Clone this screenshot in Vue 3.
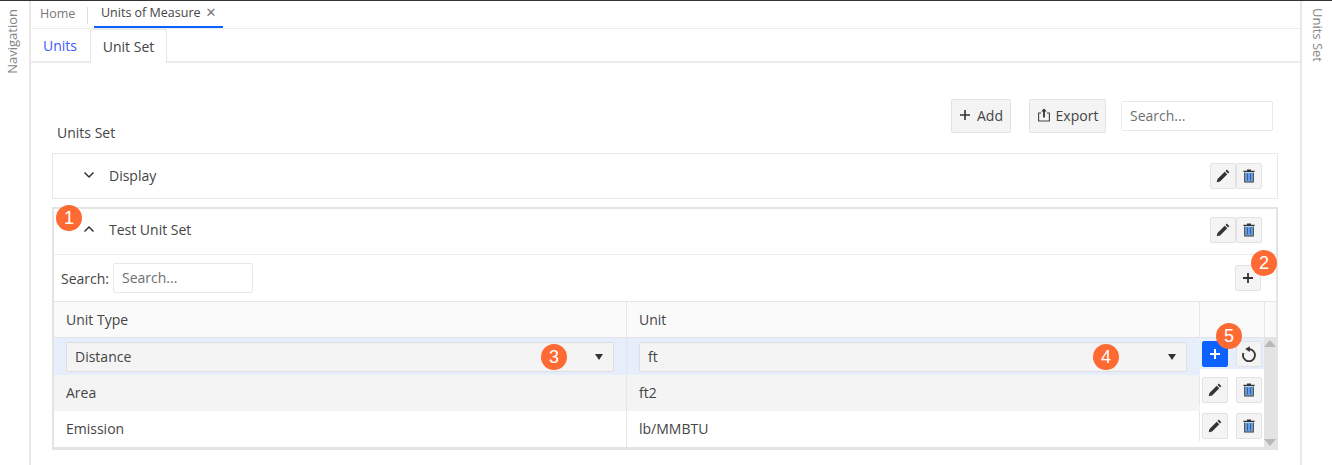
<template>
  <div class="page">
    <aside class="side side-left"><span class="side-label">Navigation</span></aside>

    <main class="main">
      <div class="doc-tabs">
        <span class="doc-tab home">Home</span>
        <span class="doc-tab active">Units of Measure<span class="close">✕</span></span>
      </div>

      <div class="sub-tabs">
        <span class="sub-tab link">Units</span>
        <span class="sub-tab current">Unit Set</span>
      </div>

      <div class="content">
        <div class="toolbar">
          <h3 class="title">Units Set</h3>
          <div class="tools">
            <button class="btn add">
              <svg viewBox="0 0 12 12" width="12" height="12"><path d="M6 1v10M1 6h10" stroke="#333" stroke-width="1.6" fill="none" /></svg>
              Add
            </button>
            <button class="btn export">
              <svg viewBox="0 0 14 14" width="14" height="14">
                <path d="M4.2 5H1.6v8h10.8V5H9.8" stroke="#444" stroke-width="1.1" fill="none" />
                <path d="M7 .6 4.2 3.4h1.9V9.4h1.8V3.4h1.9z" fill="#333" />
              </svg>
              Export
            </button>
            <input class="search wide" placeholder="Search..." />
          </div>
        </div>

        <section class="panel">
          <div class="panel-head">
            <svg class="chev" viewBox="0 0 12 8" width="12" height="8"><path d="M1.5 1.5 6 6l4.5-4.5" stroke="#333" stroke-width="1.5" fill="none" /></svg>
            <span class="panel-name">Display</span>
            <div class="pair">
              <button class="icon-btn"><svg viewBox="0 0 14 14" width="14" height="14"><path :d="pencil" fill="#333" /></svg></button>
              <button class="icon-btn"><svg viewBox="0 0 14 14" width="14" height="14"><path :d="trashFill" fill="#5f9ff0" /><path :d="trashBody" fill="#333" /></svg></button>
            </div>
          </div>
        </section>

        <section class="panel open">
          <span class="badge b1">1</span>
          <div class="panel-head">
            <svg class="chev" viewBox="0 0 12 8" width="12" height="8"><path d="M1.5 6.5 6 2l4.5 4.5" stroke="#333" stroke-width="1.5" fill="none" /></svg>
            <span class="panel-name">Test Unit Set</span>
            <div class="pair">
              <button class="icon-btn"><svg viewBox="0 0 14 14" width="14" height="14"><path :d="pencil" fill="#333" /></svg></button>
              <button class="icon-btn"><svg viewBox="0 0 14 14" width="14" height="14"><path :d="trashFill" fill="#5f9ff0" /><path :d="trashBody" fill="#333" /></svg></button>
            </div>
          </div>

          <div class="filter">
            <label>Search:</label>
            <input class="search" placeholder="Search..." />
            <button class="icon-btn plus">
              <svg viewBox="0 0 12 12" width="12" height="12"><path d="M6 1v10M1 6h10" stroke="#333" stroke-width="1.8" fill="none" /></svg>
              <span class="badge b2">2</span>
            </button>
          </div>

          <div class="grid">
            <div class="cols">
              <div class="row head">
                <div class="cell">Unit Type</div>
                <div class="cell">Unit</div>
                <div class="cell act"></div>
              </div>

              <div class="row editing">
                <div class="cell">
                  <div class="select">
                    <span>Distance</span><i class="caret"></i>
                    <span class="badge b3">3</span>
                  </div>
                </div>
                <div class="cell">
                  <div class="select">
                    <span>ft</span><i class="caret"></i>
                    <span class="badge b4">4</span>
                  </div>
                </div>
                <div class="cell act">
                  <div class="act-inner">
                    <button class="icon-btn primary">
                      <svg viewBox="0 0 12 12" width="12" height="12"><path d="M6 1v10M1 6h10" stroke="#fff" stroke-width="2" fill="none" /></svg>
                      <span class="badge b5">5</span>
                    </button>
                    <button class="icon-btn">
                      <svg viewBox="0 0 16 16" width="16" height="16">
                        <path d="M8 3.2A6 6 0 1 1 2.4 7" stroke="#333" stroke-width="1.8" fill="none" />
                        <path d="M8.8 .2V6L4.2 3.1z" fill="#333" />
                      </svg>
                    </button>
                  </div>
                </div>
              </div>

              <div v-for="r in rows" :key="r.type" class="row data">
                <div class="cell">{{ r.type }}</div>
                <div class="cell">{{ r.unit }}</div>
                <div class="cell act">
                  <div class="act-tools">
                    <button class="icon-btn"><svg viewBox="0 0 14 14" width="14" height="14"><path :d="pencil" fill="#333" /></svg></button>
                    <button class="icon-btn"><svg viewBox="0 0 14 14" width="14" height="14"><path :d="trashFill" fill="#5f9ff0" /><path :d="trashBody" fill="#333" /></svg></button>
                  </div>
                </div>
              </div>
            </div>

            <div class="scroll">
              <div class="scroll-top"></div>
              <div class="track">
                <i class="arrow up"></i>
                <i class="arrow down"></i>
              </div>
            </div>
          </div>
        </section>
      </div>
    </main>

    <aside class="side side-right"><span class="side-label flip">Units Set</span></aside>
  </div>
</template>

<script setup>
const rows = [
  { type: 'Area', unit: 'ft2' },
  { type: 'Emission', unit: 'lb/MMBTU' }
]

const pencil = 'M10.8.6 13.4 3.2 12.1 4.5 9.5 1.9ZM8.7 2.7 11.3 5.3 4.1 12.5.7 13.3 1.5 9.9Z'
const trashBody = 'M5 .5h4v1.2h3.6V3H1.4V1.7H5ZM2.2 3.6H3.2V12.6H10.8V3.6H11.8V13.6H2.2ZM5.3 4.6H5.9V11.6H5.3ZM8.1 4.6H8.7V11.6H8.1Z'
const trashFill = 'M3.2 3.6H10.8V12.6H3.2Z'
</script>

<style>
html,
body {
  margin: 0;
  background: #fff;
}
</style>

<style scoped>
.page {
  display: flex;
  width: 1332px;
  height: 465px;
  box-sizing: border-box;
  overflow: hidden;
  border-top: 1px solid #333;
  font-family: "Open Sans", sans-serif;
  font-size: 14px;
  color: #3f3f46;
  background: #fff;
}

.side {
  flex: none;
  box-sizing: border-box;
  padding-top: 8px;
  display: flex;
  justify-content: center;
  align-items: flex-start;
  color: #858585;
  font-size: 13px;
}
.side-left {
  width: 31px;
  border-right: 2px solid #e8e8e8;
  padding-right: 5px;
}
.side-right {
  width: 32px;
  border-left: 2px solid #e8e8e8;
  padding-left: 1px;
  padding-top: 7px;
}
.side-label {
  writing-mode: vertical-rl;
  transform: rotate(180deg);
}
.side-label.flip {
  transform: none;
}

.main {
  flex: 1;
  min-width: 0;
  display: flex;
  flex-direction: column;
}

.doc-tabs {
  height: 28px;
  flex: none;
  display: flex;
  align-items: stretch;
  padding-left: 9px;
  box-sizing: border-box;
  border-bottom: 1px solid #ececec;
  font-size: 12.5px;
}
.doc-tab {
  display: flex;
  align-items: center;
  height: 26px;
  padding-bottom: 2px;
  box-sizing: border-box;
  white-space: nowrap;
}
.doc-tab.home {
  color: #777;
  position: relative;
  width: 48px;
  margin-right: 6px;
}
.doc-tab.home::after {
  content: "";
  position: absolute;
  right: 0;
  top: 6px;
  height: 17px;
  width: 1px;
  background: #ddd;
}
.doc-tab.active {
  width: 129px;
  padding: 0 0 2px 7px;
  border-bottom: 2px solid #0d62ff;
  color: #444;
  height: 27px;
}
.close {
  color: #777;
  font-size: 13px;
  font-family: "DejaVu Sans", sans-serif;
  margin-left: 5px;
}

.sub-tabs {
  height: 34px;
  flex: none;
  display: flex;
  box-sizing: border-box;
  border-bottom: 2px solid #ececec;
  font-size: 14px;
}
.sub-tab {
  display: flex;
  align-items: center;
  box-sizing: border-box;
}
.sub-tab.link {
  width: 59px;
  padding-left: 12px;
  color: #3b5bfd;
}
.sub-tab.current {
  width: 77px;
  height: 34px;
  justify-content: center;
  border: 1px solid #e6e6e6;
  border-bottom: none;
  border-radius: 3px 3px 0 0;
  background: #fff;
  color: #444;
}

.content {
  flex: 1;
  padding: 36px 22px 0 21px;
  min-height: 0;
}

.toolbar {
  display: flex;
  justify-content: space-between;
  align-items: flex-end;
  height: 54px;
}
.title {
  margin: 0 0 10px 5px;
  font-size: 14px;
  font-weight: 400;
  line-height: 20px;
  color: #444;
}
.tools {
  display: flex;
  align-items: center;
  height: 34px;
  margin-bottom: 20px;
  margin-right: 5px;
}

.btn {
  height: 34px;
  display: flex;
  align-items: center;
  justify-content: center;
  box-sizing: border-box;
  border: 1px solid #e2e2e2;
  border-radius: 2px;
  background: #f4f4f4;
  color: #444;
  font: inherit;
  font-size: 14px;
  padding: 0 0 2px;
}
.btn.add {
  width: 60px;
  gap: 6px;
  margin-right: 18px;
}
.btn.export {
  width: 77px;
  gap: 5px;
  margin-right: 15px;
}

.search {
  box-sizing: border-box;
  width: 140px;
  height: 30px;
  border: 1px solid #e8e8e8;
  border-radius: 2px;
  padding: 0 8px 2px;
  font: inherit;
  font-size: 14px;
  color: #444;
  background: #fff;
  outline: none;
}
.search.wide {
  width: 152px;
}
.search::placeholder {
  color: #6f6f6f;
  opacity: 1;
}

.panel {
  position: relative;
  border: 1px solid #e8e8e8;
  margin-bottom: 8px;
}
.panel.open {
  border-width: 2px 2px 3px 2px;
  border-color: #e4e4e4;
  margin-bottom: 0;
}

.panel-head {
  height: 44px;
  display: flex;
  align-items: center;
  padding-left: 30px;
  padding-right: 15px;
}
.panel.open .panel-head {
  height: 46px;
  padding: 0 14px 3px 29px;
  border-bottom: 1px solid #ececec;
  box-sizing: border-box;
}
.chev {
  flex: none;
  margin-top: -2px;
}
.panel-name {
  flex: 1;
  margin-left: 14px;
  margin-top: -2px;
  color: #444;
}

.pair {
  display: flex;
}

.icon-btn {
  position: relative;
  width: 26px;
  height: 26px;
  flex: none;
  box-sizing: border-box;
  display: flex;
  align-items: center;
  justify-content: center;
  padding: 0;
  border: 1px solid #e2e2e2;
  border-radius: 2px;
  background: #f4f4f4;
}
.icon-btn.primary {
  background: #0d62ff;
  border-color: #0d62ff;
}

.filter {
  height: 46px;
  display: flex;
  align-items: center;
  padding: 0 15px 0 7px;
}
.filter label {
  margin-right: 4px;
  color: #444;
}
.filter .plus {
  margin-left: auto;
}

.grid {
  display: flex;
  border-top: 1px solid #e6e6e6;
}
.cols {
  flex: 1;
  min-width: 0;
}
.row {
  display: grid;
  grid-template-columns: 573px 573px 1fr;
}
.cell {
  display: flex;
  align-items: center;
  box-sizing: border-box;
  padding-left: 12px;
  border-right: 1px solid #e6e6e6;
}
.cell:last-child {
  border-right: none;
}
.row.head {
  height: 36px;
  background: #fafafa;
  border-bottom: 1px solid #e4e4e4;
  box-sizing: border-box;
  color: #444;
}
.row.editing {
  height: 37px;
}
.row.editing .cell {
  background: #e6eefc;
}
.row.data {
  height: 36px;
  color: #444;
}
.row.data .cell {
  padding-bottom: 2px;
}
.row.data:nth-of-type(3) .cell {
  background: #f4f4f4;
}
.row.editing .cell:nth-child(2),
.row.data .cell:nth-child(2) {
  border-right: none;
}

.row .cell.act {
  padding: 0;
  align-items: flex-start;
}
.row.head .cell.act {
  background: transparent;
}
.row.editing .cell.act,
.row.data .cell.act {
  background: #fff;
}
.act-inner {
  width: 100%;
  height: 31px;
  box-sizing: border-box;
  background: #e6eefc;
  display: flex;
  justify-content: space-between;
  padding: 3px 2px 0;
}
.act-tools {
  width: calc(100% + 1px);
  margin-left: -1px;
  height: 30px;
  box-sizing: border-box;
  border-left: 1px solid #e6e6e6;
  display: flex;
  justify-content: space-between;
  padding: 2px 2px 0;
}

.select {
  position: relative;
  width: 548px;
  height: 30px;
  margin-top: 1px;
  box-sizing: border-box;
  display: flex;
  align-items: center;
  padding-left: 8px;
  padding-bottom: 1px;
  border: 1px solid #dedede;
  border-radius: 2px;
  background: #f4f4f4;
  font-size: 14px;
  color: #444;
}
.caret {
  position: absolute;
  right: 10px;
  top: 11px;
  width: 0;
  height: 0;
  border-left: 4px solid transparent;
  border-right: 4px solid transparent;
  border-top: 6px solid #333;
}

.scroll {
  width: 12px;
  flex: none;
  display: flex;
  flex-direction: column;
}
.scroll-top {
  height: 36px;
  background: #fafafa;
  border-bottom: 1px solid #e4e4e4;
  border-left: 1px solid #e6e6e6;
  box-sizing: border-box;
}
.track {
  flex: 1;
  background: #e3e3e3;
  display: flex;
  flex-direction: column;
  justify-content: space-between;
  align-items: center;
  padding: 2px 0 1px;
}
.arrow {
  width: 0;
  height: 0;
  border-left: 6px solid transparent;
  border-right: 6px solid transparent;
}
.arrow.up {
  border-bottom: 7px solid #b8b8b8;
}
.arrow.down {
  border-top: 7px solid #b8b8b8;
}

.badge {
  position: absolute;
  width: 26px;
  height: 26px;
  border-radius: 50%;
  background: #fd6a33;
  color: #fff;
  font-family: "Liberation Sans", sans-serif;
  font-size: 18px;
  line-height: 26px;
  text-align: center;
  z-index: 2;
}
.b1 {
  left: 2px;
  top: -4px;
}
.b2 {
  left: 15px;
  top: -16px;
}
.b3 {
  left: 474px;
  top: 1px;
}
.b4 {
  left: 453px;
  top: 1px;
}
.b5 {
  left: 13px;
  top: -19px;
}
</style>
